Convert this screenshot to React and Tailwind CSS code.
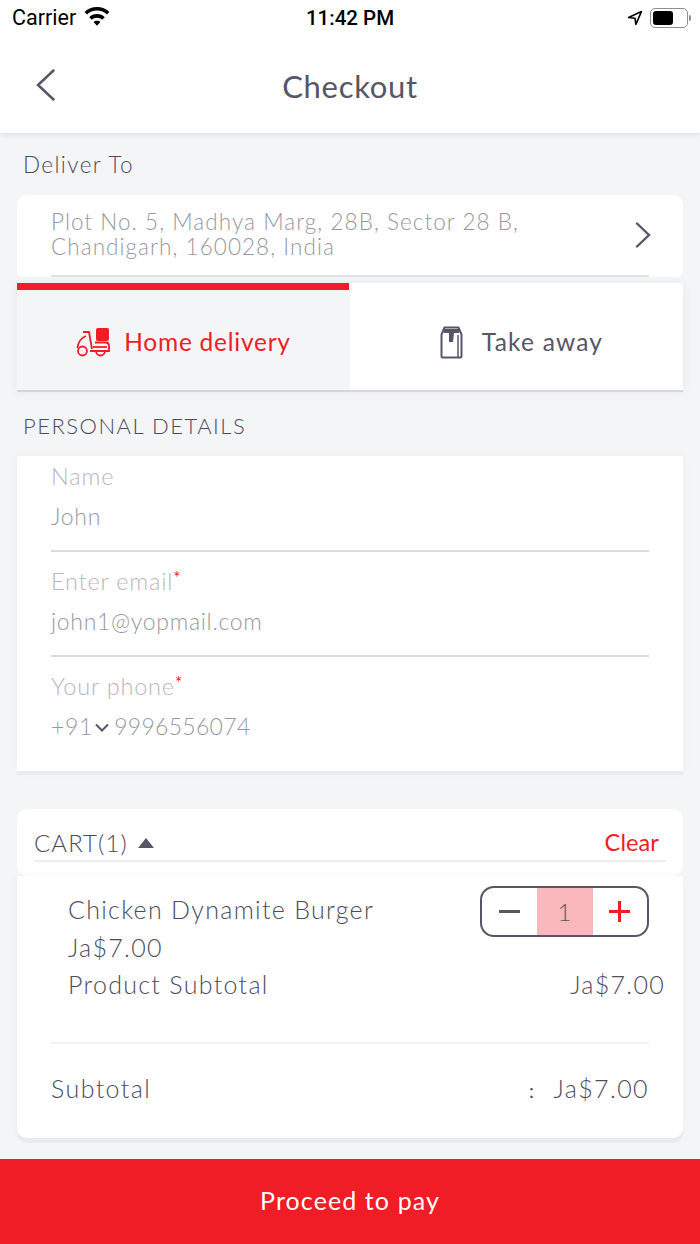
const font = { fontFamily: 'Lato, sans-serif' };

function Scooter() {
  return (
    <svg width="34" height="30" viewBox="0 0 34 30" fill="none" stroke="#f01c26" strokeWidth="1.8">
      <rect x="20" y="1" width="13" height="13" rx="2" fill="#f01c26" stroke="none" />
      <path d="M7 5h6l3 17" />
      <path d="M10 9c-5 2-8 7-8.500 12" />
      <path d="M19 15.500h11c2 0 3 1.500 3 3.500v5H14" />
      <path d="M17 20h14" />
      <circle cx="6.500" cy="24" r="4.500" />
      <path d="M20 24c0 6 9 6 9 0" />
    </svg>
  );
}

function Bag() {
  return (
    <svg width="23" height="33" viewBox="0 0 23 33" fill="none" stroke="#565666" strokeWidth="2">
      <path d="M4.500 1.500h14l3 7V30a1.500 1.500 0 0 1-1.500 1.500H3A1.500 1.500 0 0 1 1.500 30V8.500z" strokeLinejoin="round" />
      <path d="M4 3h15v4h-5l-1 9H9V7H4z" fill="#565666" stroke="none" />
      <path d="M18 9v22" strokeWidth="1.500" />
    </svg>
  );
}

function Field({ label, star, value, last, first }) {
  return (
    <div className={first ? 'h-[96px] px-[34px]' : 'h-[105px] px-[34px]'}>
      <div className={last ? 'h-full' : 'h-full border-b-2 border-[#dcdcdf]'}>
        <div className={first ? 'h-[43px] pt-[4px] text-[23.500px] leading-[32px] tracking-[0.9px] text-[#b8b8bc]' : 'h-[52px] pt-[13px] text-[23.500px] leading-[32px] tracking-[0.8px] text-[#b8b8bc]'}>
          {label}
          {star && <span className="relative -top-[6px] text-[17px] font-normal text-[#f01c26]">*</span>}
        </div>
        {value}
      </div>
    </div>
  );
}

export default function App() {
  return (
    <div className="relative flex h-[1244px] w-[700px] flex-col overflow-hidden bg-[#f4f5f7] font-light text-[#4c4c5c]" style={font}>
      <div className="bg-white shadow-[0_1px_6px_rgba(0,0,0,0.12)]">
        {/* status bar */}
        <div className="flex h-[40px] items-center justify-between pb-[4px] pl-[12px] pr-[9px] text-black">
          <div className="flex items-center gap-[8px]">
            <span className="text-[21.500px] font-normal" style={{ fontFamily: 'Roboto, sans-serif' }}>Carrier</span>
            <svg className="-mt-[4px]" width="26" height="20" viewBox="0 0 24 18.500" fill="#000">
              <path d="M12 1C7.500 1 3.500 2.700.5 5.500l2.300 2.400C5.200 5.600 8.400 4.200 12 4.200s6.800 1.400 9.200 3.700l2.300-2.400C20.500 2.700 16.500 1 12 1z" />
              <path d="M12 7.500c-2.800 0-5.300 1.100-7.200 2.800l2.400 2.400c1.200-1.100 2.900-1.800 4.800-1.800s3.600.7 4.800 1.800l2.400-2.400C17.300 8.600 14.800 7.500 12 7.500z" />
              <path d="M12 13.700c-1.300 0-2.400.5-3.200 1.200l3.200 3.300 3.200-3.300c-.8-.7-1.900-1.200-3.200-1.200z" />
            </svg>
          </div>
          <span className="absolute left-0 w-[700px] text-center text-[20.500px] font-medium" style={{ fontFamily: 'Roboto, sans-serif' }}>11:42 PM</span>
          <div className="flex items-center gap-[7px]">
            <svg width="16" height="16" viewBox="0 0 15 15" fill="none" stroke="#000" strokeWidth="1.500">
              <path d="M13.500 1.500 1.500 7l6 .8.800 5.700z" strokeLinejoin="round" />
            </svg>
            <div className="flex items-center">
              <div className="flex h-[20px] w-[38px] items-center rounded-[5px] border border-[#8e8e8e] p-[2px]">
                <div className="h-full w-[20px] rounded-[3px] bg-black" />
              </div>
              <div className="ml-[1px] h-[6px] w-[2px] rounded-r-sm bg-[#8e8e8e]" />
            </div>
          </div>
        </div>
        {/* header */}
        <div className="relative flex h-[93px] items-center justify-center pb-[1px]">
          <svg className="absolute left-[36px] top-[29px]" width="20" height="32" viewBox="0 0 20 32" fill="none" stroke="#565666" strokeWidth="2.500" strokeLinecap="round">
            <path d="M17.500 1.500 2 16l15.500 14.500" />
          </svg>
          <span className="text-[31px] font-normal leading-none tracking-[0.7px] text-[#565666]">Checkout</span>
        </div>
      </div>

      <div className="h-[62px] pl-[23px] pt-[19px] text-[22.500px] leading-[26px] tracking-[1.4px]">Deliver To</div>

      {/* address */}
      <div className="mx-[17px] flex h-[82px] rounded-t-[10px] rounded-b-[6px] bg-white pl-[34px] pr-[34px]">
        <div className="relative flex flex-1 items-start border-b-2 border-[#e2e3e6] pt-[15px] text-[22.500px] leading-[24.500px] tracking-[1.05px] text-[#98989e]">
          <div>
            Plot No. 5, Madhya Marg, 28B, Sector 28 B,
            <br />
            Chandigarh, 160028, India
          </div>
          <svg className="absolute right-[-2px] top-[27px]" width="16" height="26" viewBox="0 0 16 26" fill="none" stroke="#565666" strokeWidth="2.400" strokeLinecap="round">
            <path d="M2 1.500 14 13 2 24.500" />
          </svg>
        </div>
      </div>

      {/* delivery tabs */}
      <div className="mx-[17px] mt-[6px] flex h-[109px] border-b-2 border-[#d5d6d9] shadow-[0_0_10px_rgba(0,0,0,0.06)]">
        <div className="flex w-[333px] flex-col">
          <div className="h-[7px] w-[332px] bg-[#f01c26]" />
          <div className="flex flex-1 items-center justify-center gap-[14px] bg-[#f4f5f7] pt-[4px] text-[24.500px] font-normal tracking-[0.75px] text-[#f01c26]">
            <Scooter />
            <span>Home delivery</span>
          </div>
        </div>
        <div className="flex flex-1 items-center justify-center gap-[19px] bg-white pl-[10px] pt-[11px] text-[24.500px] font-normal tracking-[1.2px] text-[#565666]">
          <Bag />
          <span>Take away</span>
        </div>
      </div>

      <div className="h-[64px] pl-[23px] pt-[21px] text-[22px] leading-[26px] tracking-[1.5px]">PERSONAL DETAILS</div>

      {/* personal details */}
      <div className="mx-[17px] h-[315px] bg-white shadow-[0_4px_0_#e9eaec,0_0_10px_rgba(0,0,0,0.04)]">
        <Field first label="Name" value={<div className="text-[23px] leading-[34px] tracking-[0.7px] text-[#98989c]">John</div>} />
        <Field label="Enter email" star value={<div className="text-[23px] leading-[34px] tracking-[0.7px] text-[#98989c]">john1@yopmail.com</div>} />
        <Field
          label="Your phone"
          star
          last
          value={
            <div className="flex items-center text-[23px] leading-[34px] tracking-[0.7px] text-[#98989c]">
              +91
              <svg className="ml-[2px] mt-[2px]" width="14" height="9" viewBox="0 0 14 9" fill="none" stroke="#565666" strokeWidth="2">
                <path d="M1 1.500 7 7.500l6-6" />
              </svg>
              <span className="ml-[5px] tracking-[0.3px]">9996556074</span>
            </div>
          }
        />
      </div>

      {/* cart head */}
      <div className="mx-[17px] mt-[38px] h-[67px] rounded-[10px] bg-white px-[17px] pt-[18px]">
        <div className="flex h-[35px] items-center justify-between border-b-2 border-[#eeeff1] pb-[1px]">
          <div className="flex items-center gap-[10px] text-[24px] tracking-[1.1px]">
            CART(1)
            <div className="h-0 w-0 border-x-[8px] border-b-[10px] border-x-transparent border-b-[#565666]" />
          </div>
          <span className="pr-[7px] text-[23.500px] font-normal tracking-[0.1px] text-[#f01c26]">Clear</span>
        </div>
      </div>

      {/* cart items */}
      <div className="mx-[17px] h-[262px] rounded-b-[10px] bg-white shadow-[0_5px_0_#e9eaec,0_0_10px_rgba(0,0,0,0.04)]">
        <div className="flex h-[166px] pl-[51px] pr-[18px] pt-[15px]">
          <div className="flex-1 text-[25px] leading-[37.500px] tracking-[1.3px]">
            <div>Chicken Dynamite Burger</div>
            <div>Ja$7.00</div>
            <div className="flex justify-between">
              <span>Product Subtotal</span>
              <span>Ja$7.00</span>
            </div>
          </div>
        </div>
        <div className="mx-[34px] flex h-[96px] items-center justify-between border-t-2 border-[#f1f1f3] pb-[4px] text-[25px] tracking-[1.4px]">
          <span>Subtotal</span>
          <span>
            <span className="mr-[18px] text-[20px] font-normal">:</span>Ja$7.00
          </span>
        </div>
      </div>

      {/* qty stepper */}
      <div className="absolute left-[480px] top-[886px] flex h-[51px] w-[169px] items-stretch overflow-hidden rounded-[14px] border-2 border-[#565666] bg-white text-[#565666]">
        <div className="flex flex-1 items-center justify-center">
          <div className="h-[3px] w-[21px] bg-[#565666]" />
        </div>
        <div className="flex w-[56px] items-center justify-center bg-[#fbb8bc] text-[24px]">1</div>
        <div className="relative flex flex-1 items-center justify-center">
          <div className="h-[3px] w-[21px] bg-[#f01c26]" />
          <div className="absolute h-[21px] w-[3px] bg-[#f01c26]" />
        </div>
      </div>

      <div className="mt-auto flex h-[85px] items-center justify-center bg-[#f01c26] pb-[2px] text-[25px] font-normal tracking-[1.1px] text-white">
        Proceed to pay
      </div>
    </div>
  );
}
